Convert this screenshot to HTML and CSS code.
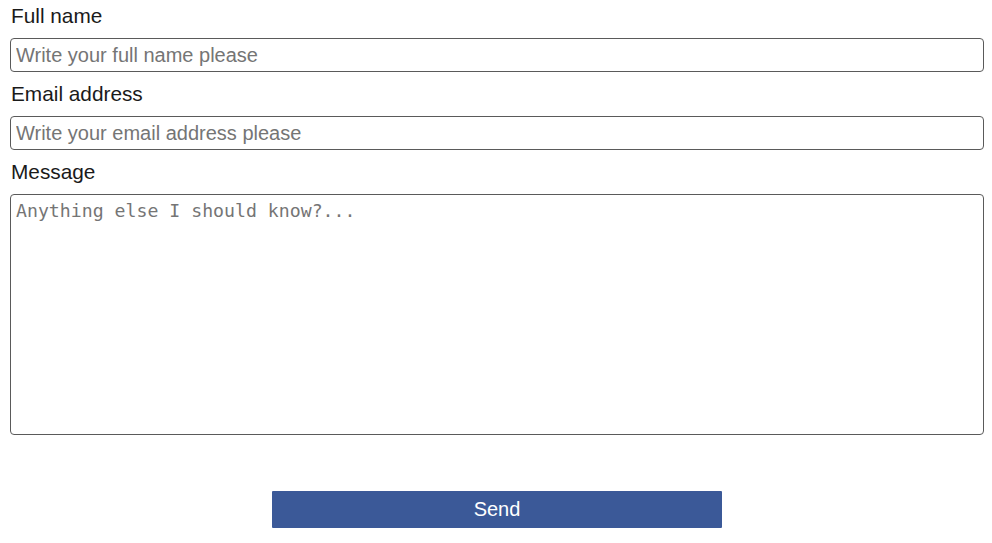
FILE: index.html
```html
<!DOCTYPE html>
<html>
<head>
<meta charset="utf-8">
<link rel="stylesheet" href="styles.css">
</head>
<body>
<form class="contact">
  <label class="label" for="name">Full name</label>
  <input class="field" id="name" type="text" placeholder="Write your full name please">
  <label class="label" for="email">Email address</label>
  <input class="field" id="email" type="email" placeholder="Write your email address please">
  <label class="label" for="msg">Message</label>
  <textarea class="area" id="msg" placeholder="Anything else I should know?..."></textarea>
  <div class="actions">
    <button class="send" type="button">Send</button>
  </div>
</form>
</body>
</html>
```

FILE: styles.css
```css
html, body {
  margin: 0;
  padding: 0;
  background: #fff;
}
.contact {
  display: flex;
  flex-direction: column;
  padding: 4px 8px 0 10px;
  font-family: "Liberation Sans", Arial, sans-serif;
}
.label {
  display: block;
  font-size: 20.8px;
  line-height: 23px;
  color: #1a1a1a;
  margin: 0 0 11px 1px;
}
.field {
  box-sizing: border-box;
  height: 34px;
  width: 100%;
  margin: 0 0 10px 0;
  padding: 0 5px;
  border: 1px solid #5a5a5a;
  border-radius: 4px;
  font-family: "Liberation Sans", Arial, sans-serif;
  font-size: 20px;
  color: #222;
  outline: none;
}
.field::placeholder {
  color: #757575;
}
.area {
  box-sizing: border-box;
  width: 100%;
  height: 241px;
  margin: 0;
  padding: 5px 5px;
  border: 1px solid #5a5a5a;
  border-radius: 4px;
  font-family: "DejaVu Sans Mono", "Liberation Mono", monospace;
  font-size: 18.2px;
  line-height: 22px;
  resize: none;
  outline: none;
}
.area::placeholder {
  color: #757575;
}
.actions {
  display: flex;
  justify-content: center;
  padding: 56px 0 0 0;
}
.send {
  width: 450px;
  height: 37px;
  background: #3b5998;
  color: #fff;
  border: none;
  border-radius: 1px;
  font-family: "Liberation Sans", Arial, sans-serif;
  font-size: 20px;
  padding: 0;
}
```
